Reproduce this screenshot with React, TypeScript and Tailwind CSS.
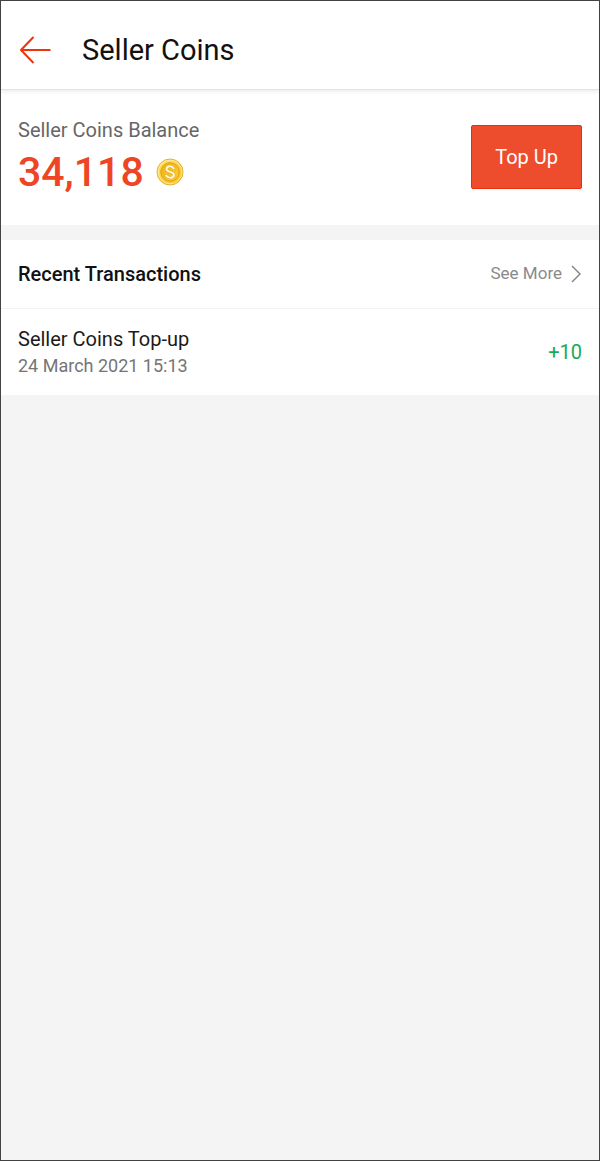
const transactions = [
  { title: "Seller Coins Top-up", date: "24 March 2021 15:13", amount: "+10" },
];

function CoinIcon() {
  return (
    <svg className="w-7 h-7" viewBox="0 0 28 28" fill="none" aria-hidden="true">
      <defs>
        <linearGradient id="coin-rim" x1="0" y1="0" x2="1" y2="1">
          <stop offset="0" stopColor="#ffe372" />
          <stop offset="0.5" stopColor="#fdd043" />
          <stop offset="1" stopColor="#f5b91f" />
        </linearGradient>
        <linearGradient id="coin-face" x1="0" y1="0" x2="1" y2="1">
          <stop offset="0" stopColor="#efb015" />
          <stop offset="1" stopColor="#ffd02e" />
        </linearGradient>
      </defs>
      <circle cx="14" cy="14" r="13" fill="url(#coin-rim)" stroke="#e6b13c" />
      <circle cx="14" cy="14" r="11.8" stroke="#ffee9e" strokeWidth="0.9" />
      <circle cx="14" cy="14" r="9.2" fill="url(#coin-face)" stroke="#e0a010" />
      <path
        d="M17.7 10.4C16.9 9 15.6 8.3 14.1 8.3C12 8.3 10.5 9.5 10.5 11.1C10.5 14.6 17.9 13.1 17.9 16.7C17.9 18.5 16.3 19.7 14.2 19.7C12.3 19.7 10.9 18.9 10.1 17.5"
        stroke="#dba016"
        strokeWidth="2.8"
        strokeLinecap="round"
      />
      <path
        d="M17.7 10.4C16.9 9 15.6 8.3 14.1 8.3C12 8.3 10.5 9.5 10.5 11.1C10.5 14.6 17.9 13.1 17.9 16.7C17.9 18.5 16.3 19.7 14.2 19.7C12.3 19.7 10.9 18.9 10.1 17.5"
        stroke="#fff9dc"
        strokeWidth="2"
        strokeLinecap="round"
      />
    </svg>
  );
}

function Header() {
  return (
    <header className="relative flex items-center gap-[27px] bg-white px-4 pt-[27px] pb-[17px] border-b border-[#e2e2e2] shadow-[0_2px_4px_rgba(0,0,0,0.07)]">
      <button type="button" aria-label="Back" className="px-[3px]">
        <svg className="w-8 h-7" viewBox="0 0 32 28" fill="none">
          <path
            d="M13.5 1L1 14L13.5 27M1 14H30.5"
            stroke="#f0330f"
            strokeWidth="2"
            strokeLinejoin="round"
          />
        </svg>
      </button>
      <h1 className="text-[29px] leading-11 text-[#111]">Seller Coins</h1>
    </header>
  );
}

function Balance() {
  return (
    <section className="flex items-start justify-between bg-white px-[17px] pt-7 pb-[23px]">
      <div>
        <h2 className="text-xl leading-6 text-[#666]">Seller Coins Balance</h2>
        <div className="flex items-center gap-3">
          <span className="text-[41px] leading-[60px] font-medium text-[#ee4524]">
            34,118
          </span>
          <CoinIcon />
        </div>
      </div>
      <button
        type="button"
        className="mt-[7px] px-[23px] h-16 rounded-xs border border-[#ee2c0a] bg-[#ee4d2d] text-xl text-white"
      >
        Top Up
      </button>
    </section>
  );
}

function Transactions() {
  return (
    <section className="mt-[15px] bg-white">
      <div className="flex items-center justify-between px-[17px] py-5 border-b border-[#f3f3f3]">
        <h2 className="text-xl leading-7 font-medium text-[#111]">
          Recent Transactions
        </h2>
        <a href="#transactions" className="flex items-center gap-2 text-[17px] text-[#8a8a8a]">
          See More
          <svg className="w-3 h-5" viewBox="0 0 12 20" fill="none" aria-hidden="true">
            <path d="M2 2L10 10L2 18" stroke="#808080" strokeWidth="1.4" />
          </svg>
        </a>
      </div>
      <ul id="transactions">
        {transactions.map((item) => (
          <li key={item.date} className="flex items-center justify-between px-[17px] py-4">
            <div>
              <p className="text-xl leading-7 text-[#1a1a1a]">{item.title}</p>
              <p className="text-lg leading-[26px] text-[#757575]">{item.date}</p>
            </div>
            <span className="text-xl text-[#1aaa55]">{item.amount}</span>
          </li>
        ))}
      </ul>
    </section>
  );
}

export default function App() {
  return (
    <div className="min-h-screen border border-[#444446] bg-[#f4f4f4] font-[Roboto,sans-serif]">
      <Header />
      <main>
        <Balance />
        <Transactions />
      </main>
    </div>
  );
}
